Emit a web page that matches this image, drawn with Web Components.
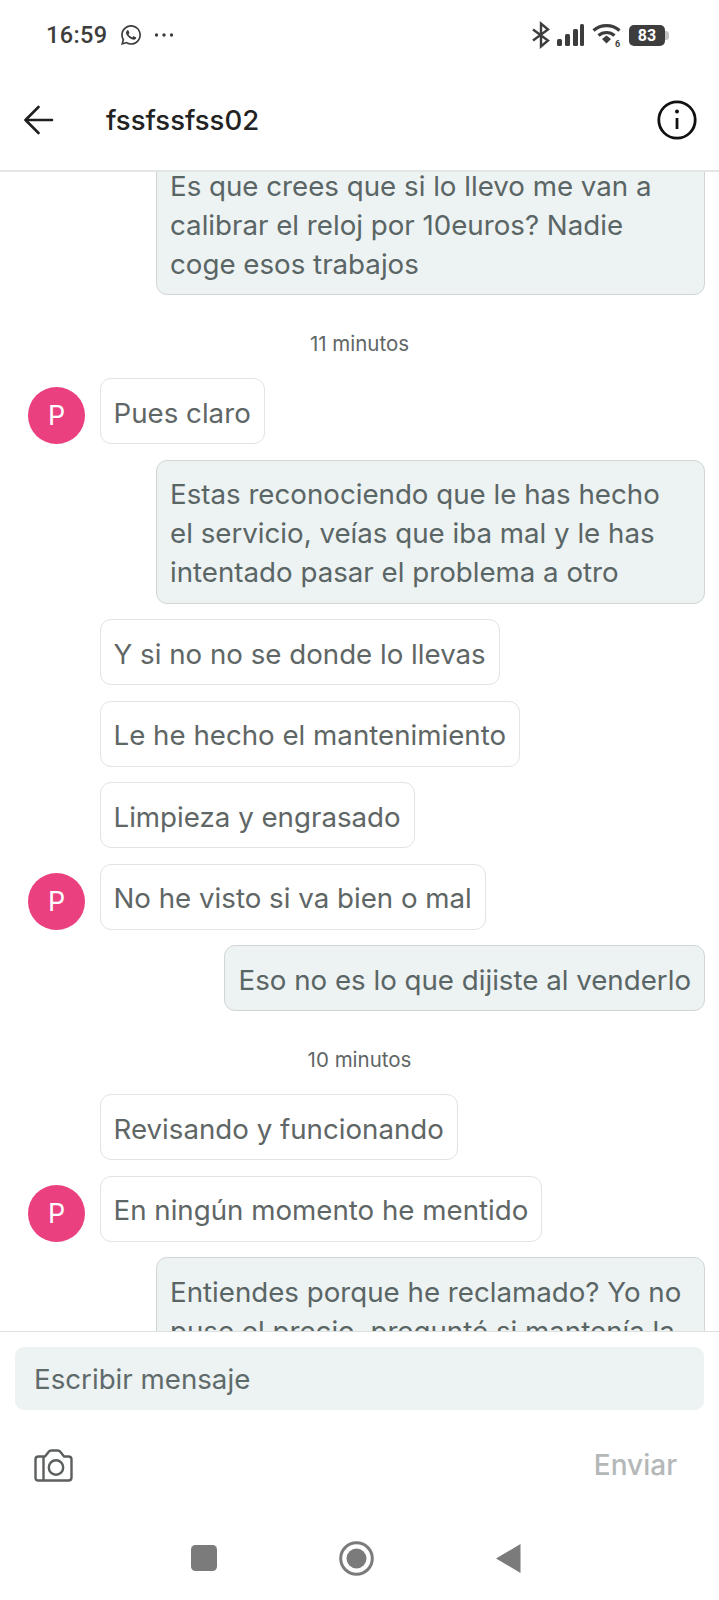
<!DOCTYPE html>
<html lang="es">
<head>
<meta charset="utf-8">
<title>Chat</title>
<style>
html, body { margin: 0; padding: 0; background: #fff; }
</style>
</head>
<body>
<chat-app>
  <status-bar slot="top"></status-bar>
  <chat-header slot="top" name="fssfssfss02"></chat-header>

  <chat-message side="me" wrapped>Es que crees que si lo llevo me van a calibrar el reloj por 10euros? Nadie coge esos trabajos</chat-message>
  <chat-time>11 minutos</chat-time>
  <chat-message avatar="P">Pues claro</chat-message>
  <chat-message side="me" wrapped>Estas reconociendo que le has hecho el servicio, veías que iba mal y le has intentado pasar el problema a otro</chat-message>
  <chat-message>Y si no no se donde lo llevas</chat-message>
  <chat-message>Le he hecho el mantenimiento</chat-message>
  <chat-message>Limpieza y engrasado</chat-message>
  <chat-message avatar="P">No he visto si va bien o mal</chat-message>
  <chat-message side="me">Eso no es lo que dijiste al venderlo</chat-message>
  <chat-time>10 minutos</chat-time>
  <chat-message>Revisando y funcionando</chat-message>
  <chat-message avatar="P">En ningún momento he mentido</chat-message>
  <chat-message side="me" wrapped>Entiendes porque he reclamado? Yo no puse el precio, pregunté si mantenía la</chat-message>

  <chat-footer slot="bottom"></chat-footer>
  <nav-bar slot="bottom"></nav-bar>
</chat-app>

<script>
const font = `"Inter", "Liberation Sans", sans-serif`

class ChatApp extends HTMLElement {
  constructor() {
    super()
    this.attachShadow({ mode: "open" }).innerHTML = `
    <style>
    :host { display: flex; flex-direction: column; width: 719px; height: 1600px; overflow: hidden; background: #fff; font-family: ${font}; }
    .list { flex: 1; min-height: 0; overflow: hidden; }
    .inner { display: flex; flex-direction: column; gap: 15.5px; margin-top: -21px; padding: 0 14px 0 28px; }
    </style>
    <slot name="top"></slot>
    <div class="list"><div class="inner"><slot></slot></div></div>
    <slot name="bottom"></slot>`
  }
}

class StatusBar extends HTMLElement {
  constructor() {
    super()
    this.attachShadow({ mode: "open" }).innerHTML = `
    <style>
    :host { display: flex; align-items: center; height: 70px; padding: 0 54px 0 46px; color: #3d3d3d; box-sizing: border-box; }
    .time { font: 500 23.5px Roboto, sans-serif; letter-spacing: .4px; }
    .wa { margin-left: 11px; }
    .dots { margin-left: 11px; }
    .right { margin-left: auto; display: flex; align-items: center; }
    .bat { position: relative; display: block; width: 36px; height: 21px; margin-left: 8px; border-radius: 5px; background: #3d3d3d; color: #fff; font: 700 16px/21px Roboto, sans-serif; text-align: center; }
    .bat::after { content: ""; position: absolute; left: 36px; top: 6px; width: 4px; height: 9px; border-radius: 0 3px 3px 0; background: #c4c4c4; }
    svg { display: block; overflow: visible; }
    </style>
    <span class="time">16:59</span>
    <svg class="wa" width="24" height="24" viewBox="0 0 24 24" fill="#3d3d3d"><path d="M12.04 2C6.58 2 2.13 6.45 2.13 11.91C2.13 13.66 2.59 15.36 3.45 16.86L2.05 22L7.3 20.62C8.75 21.41 10.38 21.83 12.04 21.83C17.5 21.83 21.95 17.38 21.95 11.92C21.95 9.27 20.92 6.78 19.05 4.91C17.18 3.03 14.69 2 12.04 2M12.05 3.67C14.25 3.67 16.31 4.53 17.87 6.09C19.42 7.65 20.28 9.72 20.28 11.92C20.28 16.46 16.58 20.15 12.04 20.15C10.56 20.15 9.11 19.76 7.85 19L7.55 18.83L4.43 19.65L5.26 16.61L5.06 16.29C4.24 15 3.8 13.47 3.8 11.91C3.81 7.37 7.5 3.67 12.05 3.67M8.53 7.33C8.37 7.33 8.1 7.39 7.87 7.64C7.65 7.89 7 8.5 7 9.71C7 10.93 7.89 12.1 8 12.27C8.14 12.44 9.76 14.94 12.25 16C12.84 16.27 13.3 16.42 13.66 16.53C14.25 16.72 14.79 16.69 15.22 16.63C15.7 16.56 16.68 16.03 16.89 15.45C17.1 14.87 17.1 14.38 17.04 14.27C16.97 14.17 16.81 14.11 16.56 14C16.31 13.86 15.09 13.26 14.87 13.18C14.64 13.1 14.5 13.06 14.31 13.3C14.15 13.55 13.67 14.11 13.53 14.27C13.38 14.44 13.24 14.46 13 14.34C12.74 14.21 11.94 13.95 11 13.11C10.26 12.45 9.77 11.64 9.62 11.39C9.5 11.15 9.61 11 9.73 10.89C9.84 10.78 10 10.6 10.1 10.45C10.23 10.31 10.27 10.2 10.35 10.04C10.43 9.87 10.39 9.73 10.33 9.61C10.27 9.5 9.77 8.26 9.56 7.77C9.36 7.29 9.16 7.35 9 7.34C8.86 7.34 8.7 7.33 8.53 7.33Z"/></svg>
    <svg class="dots" width="20" height="6" viewBox="0 0 20 6" fill="#3d3d3d"><circle cx="2.5" cy="3" r="1.7"/><circle cx="10" cy="3" r="1.7"/><circle cx="17.5" cy="3" r="1.7"/></svg>
    <div class="right">
      <svg width="20" height="26" viewBox="0 0 20 26" fill="none" stroke="#3d3d3d" stroke-width="2.4"><path d="M2 7.5 17 18.5 10 24.5V1.5l7 6L2 18.5"/></svg>
      <svg style="margin-left:6px" width="27" height="22" viewBox="0 0 27 22" fill="#3d3d3d"><rect x="0" y="15" width="5" height="7" rx="1.5"/><rect x="8" y="10" width="5" height="12" rx="1.5"/><rect x="16" y="5" width="5" height="17" rx="1.5"/><rect x="23" y="0" width="4" height="22" rx="1.5"/></svg>
      <svg style="margin-left:8px" width="29" height="26" viewBox="0 0 29 26" fill="none" stroke="#3d3d3d" stroke-width="3.2"><path d="M1.5 8.5C9 2 20 2 27.5 8.5"/><path d="M6.5 13.5c4.5-4 11.500-4 16 0"/><path d="M10 17l4.500-3.500L19 17l-4.500 4.500z" fill="#3d3d3d" stroke="none"/><text x="23" y="25" font-family="Roboto, sans-serif" font-size="9" font-weight="700" fill="#3d3d3d" stroke="none">6</text></svg>
      <span class="bat">83</span>
    </div>`
  }
}

class ChatHeader extends HTMLElement {
  constructor() {
    super()
    this.attachShadow({ mode: "open" }).innerHTML = `
    <style>
    :host { display: flex; align-items: center; height: 102px; padding: 0 22px 0 24px; border-bottom: 2px solid #e4e6e6; box-sizing: border-box; background: #fff; position: relative; z-index: 1; }
    .name { margin-left: 52px; font: 500 27.5px ${font}; color: #222; }
    .info { margin-left: auto; }
    svg { display: block; }
    </style>
    <svg width="30" height="30" viewBox="0 0 30 30" fill="none" stroke="#1f1f1f" stroke-width="2.6" stroke-linecap="round" stroke-linejoin="round"><path d="M28 15H2"/><path d="M14.500 2 1.500 15l13 13"/></svg>
    <span class="name">${this.getAttribute("name")}</span>
    <svg class="info" width="40" height="40" viewBox="0 0 40 40" fill="none" stroke="#111" stroke-width="2.8"><circle cx="20" cy="20" r="18.200"/><path d="M20 18v11"/><circle cx="20" cy="11.500" r="2" fill="#111" stroke="none"/></svg>`
  }
}

class ChatMessage extends HTMLElement {
  constructor() {
    super()
    const me = this.getAttribute("side") === "me"
    const avatar = this.getAttribute("avatar")
    const right = this.hasAttribute("wrapped") ? 18 : 13
    this.attachShadow({ mode: "open" }).innerHTML = `
    <style>
    :host { display: flex; align-items: flex-end; justify-content: ${me ? "flex-end" : "flex-start"}; }
    .av { width: 57px; height: 57px; border-radius: 50%; background: #ea4080; color: #fff; display: flex; align-items: center; justify-content: center; font-size: 27px; }
    .gutter { width: 57px; flex: none; margin-right: 14.5px; }
    .b { box-sizing: border-box; max-width: 549px; padding: 14.5px ${right}px 10.5px 13px; border-radius: 11px; font-size: 27.7px; line-height: 39px; color: ${me ? "#5a6565" : "#5f6666"}; background: ${me ? "#edf2f2" : "#fff"}; border: 1px solid ${me ? "#d0d6d6" : "#e2e4e4"}; }
    </style>
    ${me ? "" : `<div class="gutter">${avatar ? `<div class="av">${avatar}</div>` : ""}</div>`}
    <div class="b"><slot></slot></div>`
  }
}

class ChatTime extends HTMLElement {
  constructor() {
    super()
    this.attachShadow({ mode: "open" }).innerHTML = `
    <style>
    :host { display: flex; align-items: center; justify-content: center; height: 38px; padding: 14px 14px 0 0; font-size: 20.500px; color: #5f6666; }
    </style>
    <slot></slot>`
  }
}

class ChatFooter extends HTMLElement {
  constructor() {
    super()
    this.attachShadow({ mode: "open" }).innerHTML = `
    <style>
    :host { display: block; padding: 15px 15px 0; height: 192px; box-sizing: border-box; border-top: 1px solid #dfe1e1; background: #fff; position: relative; z-index: 1; }
    .input { display: flex; align-items: center; height: 63px; padding: 0 19px; border-radius: 9px; background: #edf2f2; font-size: 27.7px; color: #5f6b6b; }
    .row { display: flex; align-items: center; justify-content: space-between; padding: 38px 27px 0 19px; }
    .send { font-size: 28px; font-weight: 500; color: #b4b8b8; }
    svg { display: block; }
    </style>
    <div class="input">Escribir mensaje</div>
    <div class="row">
      <svg width="39" height="33" viewBox="0 0 39 33" fill="none" stroke="#5c5f5f" stroke-width="2.400" stroke-linejoin="round"><path d="M4.500 7.500H11l3.500-4.500Q15.500 1.500 17.500 1.500h6q2 0 3 1.500L30 7.500h4.500q3 0 3 3v18q0 3-3 3h-30q-3 0-3-3v-18q0-3 3-3z"/><path d="M9.500 8v23"/><circle cx="22" cy="18.500" r="7.200"/></svg>
      <span class="send">Enviar</span>
    </div>`
  }
}

class NavBar extends HTMLElement {
  constructor() {
    super()
    this.attachShadow({ mode: "open" }).innerHTML = `
    <style>
    :host { display: flex; align-items: center; height: 77px; padding: 0 0 7px 191px; box-sizing: border-box; background: #fff; }
    svg { display: block; }
    </style>
    <svg width="26" height="26" viewBox="0 0 26 26" fill="#7b7b7b"><rect width="26" height="26" rx="4.500"/></svg>
    <svg style="margin-left:122px" width="35" height="35" viewBox="0 0 35 35"><circle cx="17.500" cy="17.500" r="15.800" fill="none" stroke="#7b7b7b" stroke-width="3"/><circle cx="17.500" cy="17.500" r="10" fill="#7b7b7b"/></svg>
    <svg style="margin-left:122px" width="25" height="29" viewBox="0 0 25 29" fill="#7b7b7b"><path d="M24.500 0v29L0 14.500z"/></svg>`
  }
}

customElements.define("chat-app", ChatApp)
customElements.define("status-bar", StatusBar)
customElements.define("chat-header", ChatHeader)
customElements.define("chat-message", ChatMessage)
customElements.define("chat-time", ChatTime)
customElements.define("chat-footer", ChatFooter)
customElements.define("nav-bar", NavBar)
</script>
</body>
</html>
